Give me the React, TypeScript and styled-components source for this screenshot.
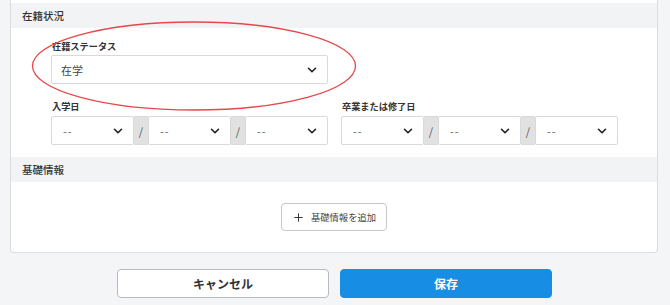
import styled, { createGlobalStyle } from "styled-components";
import { ChevronDown, Plus } from "lucide-react";

const GlobalStyle = createGlobalStyle`
  body {
    margin: 0;
    background: #f4f5f7;
    font-family: "Noto Sans CJK JP", "Noto Sans", sans-serif;
    color: #333;
  }
`;

const DATE_PARTS = ["--", "--", "--"];

const SelectBox = ({ value, inset = 9 }: { value: string; inset?: number }) => (
  <Select $inset={inset}>
    <SelectValue $muted={value === "--"}>{value}</SelectValue>
    <ChevronDown size={14} strokeWidth={2.8} color="#222" />
  </Select>
);

const DateField = ({ label }: { label: string }) => (
  <Field>
    <Label>{label}</Label>
    <DateRow>
      {DATE_PARTS.map((v, i) => [
        i > 0 && <Slash key={`s${i}`}>/</Slash>,
        <SelectBox key={`v${i}`} value={v} inset={11} />,
      ])}
    </DateRow>
  </Field>
);

export default function App() {
  return (
    <Page>
      <GlobalStyle />
      <Card>
        <SectionHeader>在籍状況</SectionHeader>
        <SectionBody>
          <Field $width={277}>
            <Label>在籍ステータス</Label>
            <SelectBox value="在学" />
          </Field>
          <Columns>
            <DateField label="入学日" />
            <DateField label="卒業または修了日" />
          </Columns>
        </SectionBody>
        <SectionHeader>基礎情報</SectionHeader>
        <AddArea>
          <AddButton>
            <Plus size={13} strokeWidth={1.8} color="#333" />
            基礎情報を追加
          </AddButton>
        </AddArea>
      </Card>
      <Footer>
        <CancelButton>キャンセル</CancelButton>
        <SaveButton>保存</SaveButton>
      </Footer>
      <Highlight width="326" height="92" viewBox="0 0 326 92">
        <ellipse cx="163" cy="46" rx="161.5" ry="44" fill="none" stroke="#e5484d" strokeWidth="1.3" />
      </Highlight>
    </Page>
  );
}

const Page = styled.div`
  position: relative;
  width: 670px;
  height: 305px;
  overflow: hidden;
`;

const Card = styled.div`
  margin: 0 12px 0 10px;
  padding-top: 3px;
  background: #fff;
  border: 1px solid #dadcdf;
  border-top: none;
  border-radius: 0 0 4px 4px;
`;

const SectionHeader = styled.div`
  height: 25px;
  display: flex;
  align-items: center;
  padding-left: 11px;
  background: #f2f3f5;
  font-size: 10.5px;
  font-weight: 500;
  color: #333;
`;

const SectionBody = styled.div`
  padding: 12px 0 12px 40px;
  display: flex;
  flex-direction: column;
  gap: 16px;
`;

const Field = styled.div<{ $width?: number }>`
  display: flex;
  flex-direction: column;
  gap: 2px;
  width: ${(p) => (p.$width ? `${p.$width}px` : "auto")};
`;

const Label = styled.div`
  font-size: 9.2px;
  line-height: 13px;
  font-weight: 700;
  color: #333;
  padding-left: 1px;
`;

const Select = styled.div<{ $inset: number }>`
  height: 29px;
  min-width: 0;
  box-sizing: border-box;
  display: flex;
  align-items: center;
  justify-content: space-between;
  padding: 0 8px 0 ${(p) => p.$inset}px;
  background: #fff;
  border: 1px solid #d9d9d9;
  border-radius: 2px;
`;

const SelectValue = styled.span<{ $muted: boolean }>`
  font-size: 11px;
  letter-spacing: ${(p) => (p.$muted ? "1px" : "0")};
  color: ${(p) => (p.$muted ? "#666" : "#444")};
`;

const Columns = styled.div`
  display: grid;
  grid-template-columns: 277px 277px;
  column-gap: 13px;
`;

const DateRow = styled.div`
  display: grid;
  grid-template-columns: 1fr 14px 1fr 14px 1fr;
  margin-top: 1px;
`;

const Slash = styled.div`
  height: 29px;
  box-sizing: border-box;
  display: flex;
  align-items: center;
  justify-content: center;
  background: #e1e1e1;
  border-top: 1px solid #d9d9d9;
  border-bottom: 1px solid #d9d9d9;
  font-size: 11px;
  color: #555;
`;

const AddArea = styled.div`
  height: 70px;
  display: flex;
  align-items: center;
  justify-content: center;
`;

const AddButton = styled.button`
  height: 28px;
  width: 106px;
  display: flex;
  align-items: center;
  justify-content: center;
  gap: 6px;
  padding: 0;
  background: #fff;
  border: 1px solid #c4c6c9;
  border-radius: 4px;
  font-family: "Noto Sans CJK JP", sans-serif;
  font-size: 9.3px;
  color: #444;
`;

const Footer = styled.div`
  display: flex;
  justify-content: center;
  gap: 11px;
  margin-top: 16px;
  padding-right: 1px;
`;

const BaseButton = styled.button`
  width: 212px;
  height: 29px;
  box-sizing: border-box;
  border-radius: 4px;
  font-family: "Noto Sans CJK JP", sans-serif;
  font-size: 12px;
  font-weight: 700;
`;

const CancelButton = styled(BaseButton)`
  background: #fff;
  border: 1px solid #b8babd;
  color: #333;
`;

const SaveButton = styled(BaseButton)`
  background: #178de3;
  border: 1px solid #178de3;
  color: #fff;
`;

const Highlight = styled.svg`
  position: absolute;
  left: 31px;
  top: 20px;
  pointer-events: none;
`;
